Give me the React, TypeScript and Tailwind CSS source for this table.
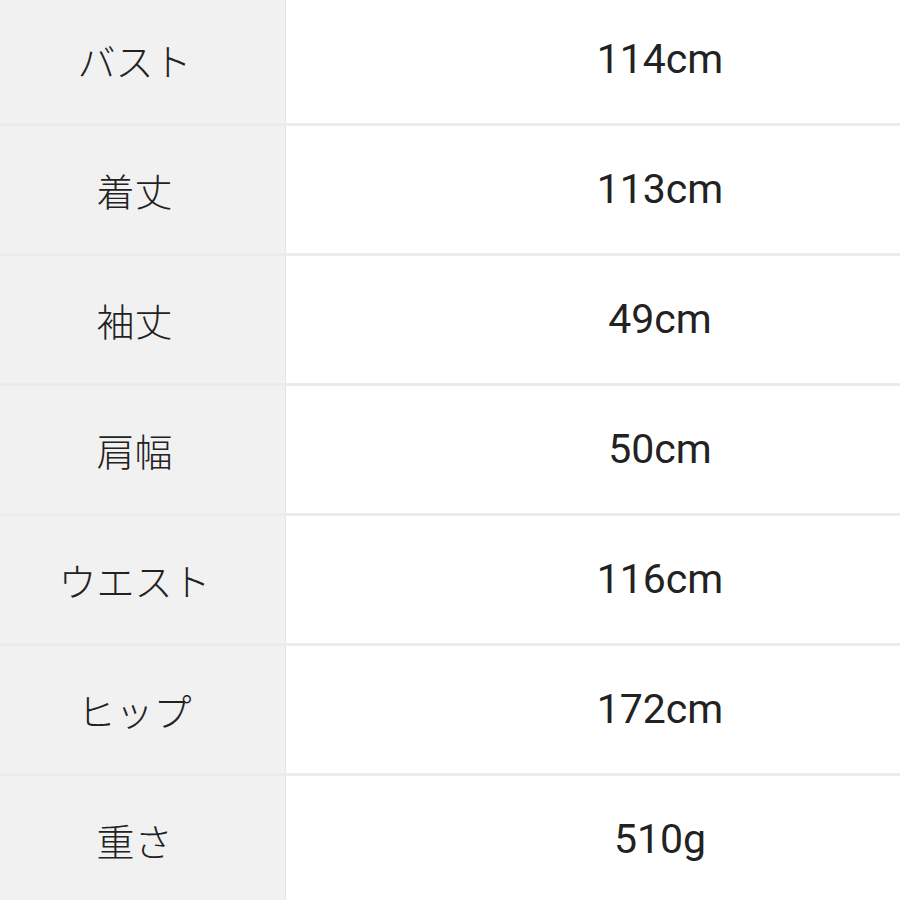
const rows = [
  { label: "バスト", value: "114cm" },
  { label: "着丈", value: "113cm" },
  { label: "袖丈", value: "49cm" },
  { label: "肩幅", value: "50cm" },
  { label: "ウエスト", value: "116cm" },
  { label: "ヒップ", value: "172cm" },
  { label: "重さ", value: "510g" },
];

export default function App() {
  return (
    <div className="w-[900px] h-[900px] overflow-hidden bg-white">
      <div className="-mt-[4px] flex flex-col">
        {rows.map((row) => (
          <div key={row.label} className="flex h-[130px] border-b-[3px] border-[#ebebeb]">
            <div
              className="w-[286px] shrink-0 flex items-center justify-center pr-[16px] bg-[#f1f1f1] border-r border-[#e4e4e4] text-[38px] font-light text-[#222]"
              style={{ fontFamily: '"Noto Sans CJK JP", "Noto Sans", sans-serif' }}
            >
              {row.label}
            </div>
            <div
              className="flex-1 flex items-center justify-center pl-[134px] text-[41px] text-[#222]"
              style={{ fontFamily: 'Roboto, "Liberation Sans", sans-serif' }}
            >
              {row.value}
            </div>
          </div>
        ))}
      </div>
    </div>
  );
}
